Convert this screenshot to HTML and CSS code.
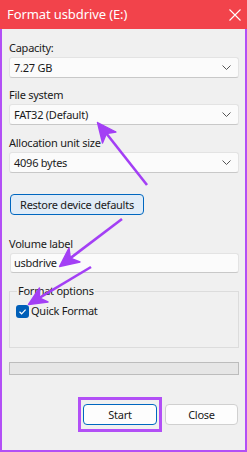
FILE: index.html
```html
<!DOCTYPE html>
<html>
<head>
<meta charset="utf-8">
<link rel="stylesheet" href="styles.css">
</head>
<body>
<div class="window">
  <div class="titlebar">
    <span class="title">Format usbdrive (E:)</span>
    <svg class="close" width="12" height="12" viewBox="0 0 12 12"><path d="M0.5 0.5 L11.5 11.5 M11.5 0.5 L0.5 11.5" stroke="#fff" stroke-width="1.1" fill="none"/></svg>
  </div>
  <div class="content">
    <div class="label l1">Capacity:</div>
    <div class="select"><span>7.27 GB</span><svg class="chev" width="9" height="5" viewBox="0 0 9 5"><path d="M0.5 0.5 L4.5 4.5 L8.5 0.5" stroke="#555" stroke-width="1" fill="none"/></svg></div>
    <div class="label">File system</div>
    <div class="select"><span>FAT32 (Default)</span><svg class="chev" width="9" height="5" viewBox="0 0 9 5"><path d="M0.5 0.5 L4.5 4.5 L8.5 0.5" stroke="#555" stroke-width="1" fill="none"/></svg></div>
    <div class="label l3">Allocation unit size</div>
    <div class="select"><span>4096 bytes</span><svg class="chev" width="9" height="5" viewBox="0 0 9 5"><path d="M0.5 0.5 L4.5 4.5 L8.5 0.5" stroke="#555" stroke-width="1" fill="none"/></svg></div>
    <div class="restore">Restore device defaults</div>
    <div class="label l4">Volume label</div>
    <div class="input">usbdrive</div>
    <div class="group">
      <div class="legend">Format options</div>
      <div class="check-row">
        <span class="checkbox"><svg width="13" height="13" viewBox="0 0 13 13"><path d="M3.5 6.8 L5.6 8.8 L9.6 4.6" stroke="#fff" stroke-width="1.2" fill="none"/></svg></span>
        <span>Quick Format</span>
      </div>
    </div>
    <div class="progress"></div>
    <div class="buttons">
      <div class="highlight"><div class="btn primary">Start</div></div>
      <div class="btn">Close</div>
    </div>
  </div>
  <svg class="arrows" width="247" height="452" viewBox="0 0 247 452">
    <g fill="#a33ff5" stroke="#a33ff5">
      <line x1="106" y1="133" x2="147" y2="185" stroke-width="2.6"/>
      <polygon points="97.5,122.5 116,132 106.5,133.5 102.5,143" stroke-width="1.4" stroke-linejoin="round"/>
      <line x1="70.4" y1="258.1" x2="122" y2="219" stroke-width="2.6"/>
      <polygon points="59.5,266.5 80,262 70.4,258.1 69,248" stroke-width="1.4" stroke-linejoin="round"/>
      <line x1="39.3" y1="297.9" x2="91" y2="267" stroke-width="2.6"/>
      <polygon points="28.5,304.5 48,302 39.3,297.9 39.5,288" stroke-width="1.4" stroke-linejoin="round"/>
    </g>
  </svg>
</div>
</body>
</html>
```

FILE: styles.css
```css
* { box-sizing: border-box; }
html, body { margin: 0; padding: 0; }
body {
  font-family: "Noto Sans", "Open Sans", sans-serif;
  font-size: 11px;
  letter-spacing: -0.25px;
  color: #1a1a1a;
  background: #f0f0f0;
}
.window {
  position: relative;
  width: 247px;
  height: 452px;
  background: #f0f0f0;
  border: 2px solid #b24ff6;
  border-top: none;
  display: flex;
  flex-direction: column;
}
.titlebar {
  height: 29px;
  background: #f2434b;
  color: #fff;
  display: flex;
  align-items: center;
  justify-content: space-between;
  font-size: 13px;
  letter-spacing: -0.1px;
  margin: 0 -2px;
  padding-left: 7px;
  padding-right: 6px;
}
.title { line-height: 29px; }
.close { display: block; }
.content {
  padding: 0 6px 0 7px;
  display: flex;
  flex-direction: column;
}
.label {
  line-height: 16px;
  height: 16px;
  margin-top: 9px;
  white-space: nowrap;
}
.l1 { margin-top: 11px; }
.l3 { margin-top: 10px; }
.l4 { margin-top: 21px; }
.select {
  margin-top: 1px;
  height: 21px;
  background: #fbfbfb;
  border: 1px solid #e3e3e3;
  border-bottom-color: #c8c8c8;
  border-radius: 3px;
  display: flex;
  align-items: center;
  justify-content: space-between;
  padding: 0 7px 0 4px;
}
.chev { display: block; }
.restore {
  margin-top: 21px;
  margin-left: 1px;
  width: 134px;
  height: 21px;
  border: 1px solid #0067c0;
  border-radius: 4px;
  background: #e1ecf7;
  display: flex;
  align-items: center;
  justify-content: center;
  white-space: nowrap;
}
.input {
  margin-top: 1px;
  margin-left: 1px;
  height: 20px;
  background: #fbfbfb;
  border: 1px solid #e3e3e3;
  border-bottom-color: #c8c8c8;
  border-radius: 3px;
  padding-left: 3px;
  line-height: 18px;
}
.group {
  margin-top: 18px;
  height: 57px;
  border: 1px solid #dcdcdc;
}
.legend {
  margin-top: -9px;
  margin-left: 7px;
  width: max-content;
  padding: 0 1px;
  line-height: 16px;
  background: #f0f0f0;
}
.check-row {
  margin-top: 5px;
  margin-left: 6px;
  display: flex;
  align-items: center;
  gap: 2px;
  line-height: 14px;
}
.checkbox {
  width: 13px;
  height: 13px;
  border-radius: 3px;
  background: #005fb8;
  display: block;
}
.checkbox svg { display: block; }
.progress {
  margin-top: 14px;
  height: 13px;
  background: #e6e6e6;
  border: 1px solid #bcbcbc;
}
.buttons {
  margin-top: 22px;
  display: flex;
  justify-content: flex-end;
  align-items: center;
  gap: 3px;
  padding-right: 1px;
}
.highlight {
  border: 3px solid #b24ff6;
  padding: 4px 2px;
}
.btn {
  width: 73px;
  height: 21px;
  border: 1px solid #d0d0d0;
  border-radius: 4px;
  background: #fdfdfd;
  display: flex;
  align-items: center;
  justify-content: center;
}
.btn.primary {
  width: 74px;
  border-color: #0067c0;
}
.arrows {
  position: absolute;
  left: -2px;
  top: 0;
  pointer-events: none;
}
```
